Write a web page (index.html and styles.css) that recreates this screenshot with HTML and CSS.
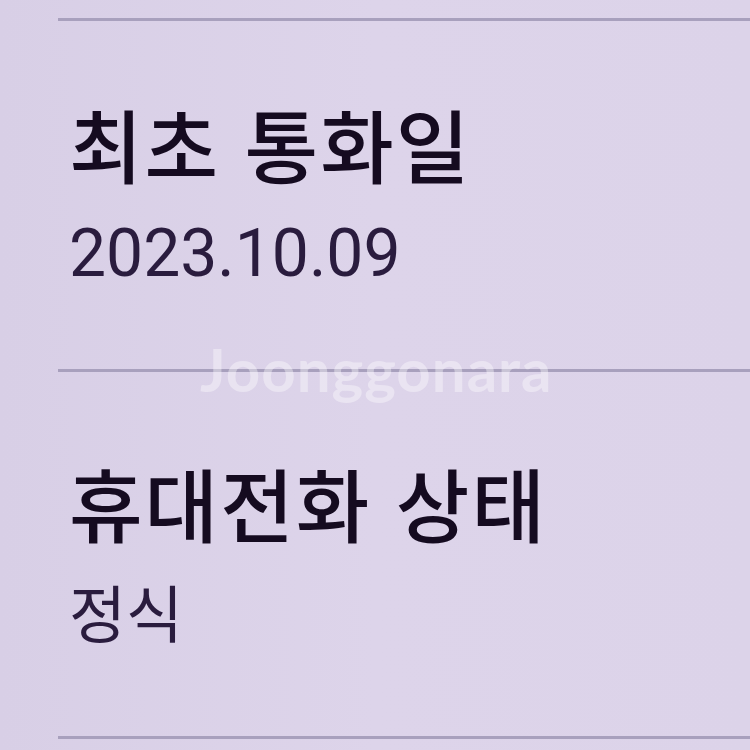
FILE: index.html
```html
<!DOCTYPE html>
<html lang="ko">
<head>
<meta charset="utf-8">
<link rel="stylesheet" href="styles.css">
</head>
<body>
<div class="screen">
  <div class="list">
    <div class="item first">
      <div class="label">최초 통화일</div>
      <div class="value date">2023.10.09</div>
    </div>
    <div class="item second">
      <div class="label">휴대전화 상태</div>
      <div class="value">정식</div>
    </div>
    <div class="item last"></div>
  </div>
  <div class="watermark">Joonggonara</div>
</div>
</body>
</html>
```
FILE: styles.css
```css
html, body {
  margin: 0;
  padding: 0;
}
body {
  width: 750px;
  height: 750px;
  overflow: hidden;
  background: #dbd2e9;
}
.screen {
  position: relative;
  width: 750px;
  height: 750px;
  background: linear-gradient(90deg, #d8cfe6 0%, #ddd4ea 50%, #dcd3e9 100%);
  overflow: hidden;
}
.list {
  display: flex;
  flex-direction: column;
  padding-top: 18px;
}
.item {
  margin-left: 58px;
  border-top: 3px solid #a8a0bd;
  padding-left: 11px;
}
.item.first {
  height: 348px;
}
.item.second {
  height: 364px;
}
.label {
  font-family: "Noto Sans CJK KR", "Noto Sans", sans-serif;
  font-weight: 500;
  font-size: 80px;
  line-height: 80px;
  color: #150b20;
  margin-top: 81px;
  letter-spacing: 2px;
}
.item.second .label {
  margin-top: 89px;
}
.value {
  font-family: "Noto Sans CJK KR", "Noto Sans", sans-serif;
  font-size: 62px;
  line-height: 64px;
  color: #2a1c3e;
  margin-top: 38px;
}
.value.date {
  font-family: Roboto, "Noto Sans CJK KR", sans-serif;
  font-size: 66px;
  margin-top: 40px;
}
.watermark {
  position: absolute;
  left: 200px;
  top: 334px;
  font-family: Lato, "Open Sans", sans-serif;
  font-weight: 700;
  font-size: 60px;
  line-height: 70px;
  color: rgba(255, 255, 255, 0.38);
  letter-spacing: 1px;
}
```
